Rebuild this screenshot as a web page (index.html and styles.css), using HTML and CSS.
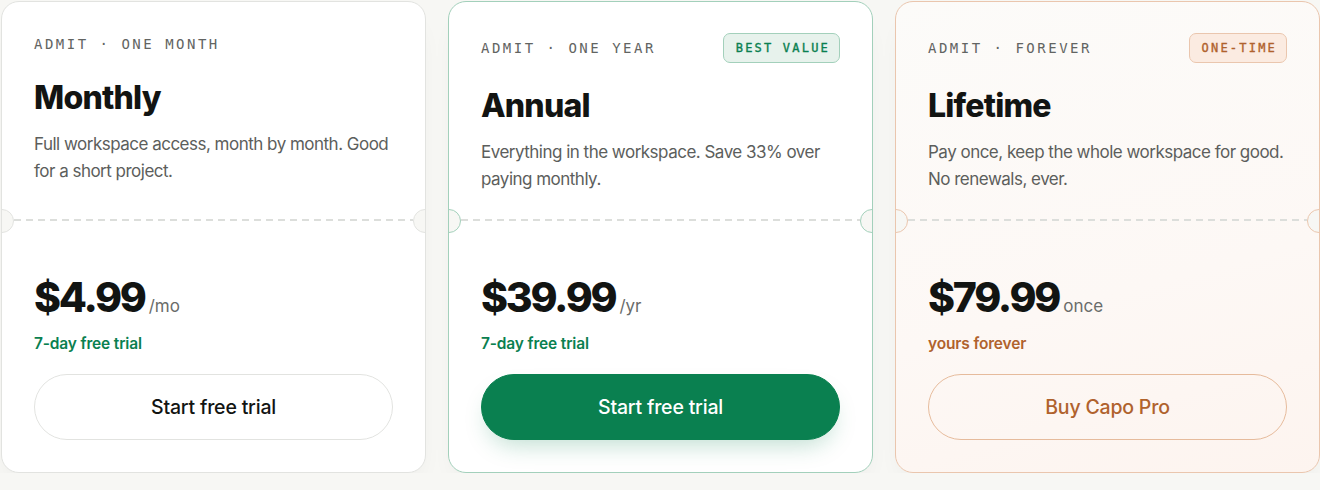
FILE: index.html
```html
<!DOCTYPE html>
<html lang="en">
<head>
    <meta charset="UTF-8">
    <meta name="viewport" content="width=device-width, initial-scale=1.0">
    <title>Capo Pro - Plans</title>
    <link rel="stylesheet" href="styles.css">
</head>
<body>
    <main class="plans">
        <!-- Monthly -->
        <article class="ticket">
            <div class="ticket-top">
                <div class="ticket-head">
                    <span class="eyebrow">ADMIT · ONE MONTH</span>
                </div>
                <h2 class="plan-name">Monthly</h2>
                <p class="plan-desc">Full workspace access, month by month. Good for a short project.</p>
            </div>
            <div class="perf"></div>
            <div class="ticket-bottom">
                <div class="price">
                    <span class="amount">$4.99</span>
                    <span class="period">/mo</span>
                </div>
                <p class="note">7-day free trial</p>
                <button class="cta">Start free trial</button>
            </div>
        </article>

        <!-- Annual -->
        <article class="ticket ticket--featured">
            <div class="ticket-top">
                <div class="ticket-head">
                    <span class="eyebrow">ADMIT · ONE YEAR</span>
                    <span class="badge">BEST VALUE</span>
                </div>
                <h2 class="plan-name">Annual</h2>
                <p class="plan-desc">Everything in the workspace. Save 33% over paying monthly.</p>
            </div>
            <div class="perf"></div>
            <div class="ticket-bottom">
                <div class="price">
                    <span class="amount">$39.99</span>
                    <span class="period">/yr</span>
                </div>
                <p class="note">7-day free trial</p>
                <button class="cta">Start free trial</button>
            </div>
        </article>

        <!-- Lifetime -->
        <article class="ticket ticket--lifetime">
            <div class="ticket-top">
                <div class="ticket-head">
                    <span class="eyebrow">ADMIT · FOREVER</span>
                    <span class="badge">ONE-TIME</span>
                </div>
                <h2 class="plan-name">Lifetime</h2>
                <p class="plan-desc">Pay once, keep the whole workspace for good. No renewals, ever.</p>
            </div>
            <div class="perf"></div>
            <div class="ticket-bottom">
                <div class="price">
                    <span class="amount">$79.99</span>
                    <span class="period">once</span>
                </div>
                <p class="note">yours forever</p>
                <button class="cta">Buy Capo Pro</button>
            </div>
        </article>
    </main>
</body>
</html>
```

FILE: styles.css
```css
:root {
    --page: #f7f7f4;
    --ink: #121412;
    --muted: #5c5e5c;
    --line: #e2e3e0;
    --perf: #dcdedb;
    --green: #0a8050;
    --green-line: #a3d0bb;
    --green-soft: #e7f2ec;
    --copper: #b0622d;
    --copper-line: #eac6ae;
    --copper-soft: #fbebe1;
}

* {
    box-sizing: border-box;
}

body {
    margin: 0;
    background: var(--page);
    font-family: Inter, "Noto Sans", sans-serif;
    color: var(--ink);
}

.plans {
    display: grid;
    grid-template-columns: repeat(3, 425px);
    gap: 22px;
    padding: 1px 1px 0;
}

.ticket {
    position: relative;
    overflow: hidden;
    background: #fff;
    border: 1px solid var(--line);
    border-radius: 18px;
    box-shadow: 0 16px 30px -14px rgba(0, 0, 0, 0.09);
}

.ticket-top {
    height: 217px;
    padding: 31px 32px 0;
}

.ticket-head {
    display: flex;
    align-items: center;
    justify-content: space-between;
    min-height: 22px;
}

.eyebrow {
    font-family: "DejaVu Sans Mono", "Liberation Mono", monospace;
    font-size: 14px;
    line-height: 22px;
    letter-spacing: 2.5px;
    color: #626462;
}

.badge {
    font-family: "DejaVu Sans Mono", "Liberation Mono", monospace;
    font-size: 12px;
    letter-spacing: 2.2px;
    line-height: 28px;
    padding: 0 9px 0 12px;
    border-radius: 7px;
    border: 1px solid;
    -webkit-text-stroke: 0.35px currentColor;
}

.plan-name {
    margin: 24px 0 0;
    font-size: 32px;
    line-height: 38px;
    font-weight: 800;
    letter-spacing: -0.025em;
}

.plan-desc {
    margin: 14px 0 0;
    font-size: 17px;
    line-height: 27px;
    letter-spacing: -0.03em;
    color: var(--muted);
}

/* dashed tear line with a half-round notch cut into each edge */
.perf {
    position: relative;
    height: 2px;
    margin: 0 12px;
    background: repeating-linear-gradient(90deg, var(--perf) 0 7px, transparent 7px 12px);
}

.perf::before,
.perf::after {
    content: "";
    position: absolute;
    top: -10px;
    width: 22px;
    height: 22px;
    border-radius: 50%;
    background: var(--page);
    border: 1px solid var(--line);
}

.perf::before {
    left: -24px;
}

.perf::after {
    right: -24px;
}

.ticket-bottom {
    padding: 55px 32px 32px;
}

.price {
    display: flex;
    align-items: baseline;
    gap: 4px;
}

.amount {
    font-size: 41px;
    line-height: 42px;
    font-weight: 800;
    letter-spacing: -0.055em;
}

.period {
    font-size: 17px;
    line-height: 1;
    color: #6a6c6a;
}

.note {
    margin: 15px 0 0;
    font-size: 15.5px;
    line-height: 22px;
    font-weight: 600;
    letter-spacing: -0.01em;
    color: var(--green);
}

.cta {
    display: block;
    width: 100%;
    height: 66px;
    margin-top: 19px;
    border: 1px solid var(--line);
    border-radius: 999px;
    background: #fff;
    font-family: inherit;
    font-size: 19.5px;
    font-weight: 500;
    letter-spacing: -0.01em;
    color: var(--ink);
    cursor: pointer;
}

/* Annual */
.ticket--featured {
    border-color: var(--green-line);
}

.ticket--featured .perf::before,
.ticket--featured .perf::after {
    border-color: var(--green-line);
}

.ticket--featured .badge {
    color: var(--green);
    background: var(--green-soft);
    border-color: var(--green-line);
}

.ticket--featured .cta {
    background: var(--green);
    border-color: var(--green);
    color: #fff;
    box-shadow: 0 12px 24px -8px rgba(10, 128, 80, 0.28);
}

/* Lifetime */
.ticket--lifetime {
    border-color: var(--copper-line);
    background: linear-gradient(165deg, #fcfbf9 0%, #fdf8f5 60%, #fdf4ef 100%);
}

.ticket--lifetime .perf::before,
.ticket--lifetime .perf::after {
    border-color: var(--copper-line);
}

.ticket--lifetime .badge {
    color: var(--copper);
    background: var(--copper-soft);
    border-color: var(--copper-line);
}

.ticket--lifetime .note {
    color: var(--copper);
}

.ticket--lifetime .cta {
    background: transparent;
    border-color: #e6bb9c;
    color: var(--copper);
}
```
